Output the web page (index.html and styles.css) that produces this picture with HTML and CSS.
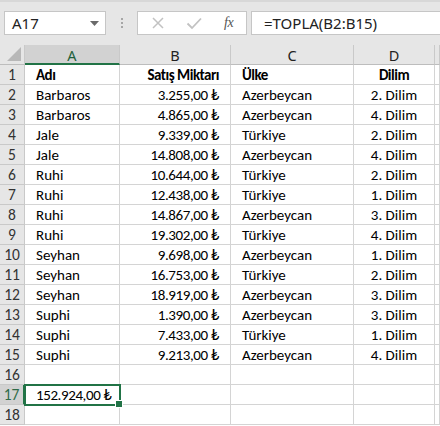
FILE: index.html
```html
<!DOCTYPE html>
<html>
<head>
<meta charset="utf-8">
<link rel="stylesheet" href="styles.css">
</head>
<body>
<div class="app">
  <div class="toolbar">
    <div class="namebox">
      <span class="name">A17</span>
      <svg class="arrow" width="9" height="5" viewBox="0 0 9 5"><polygon points="0,0 9,0 4.5,5" fill="#6a6a6a"/></svg>
    </div>
    <div class="dots"><i></i><i></i><i></i></div>
    <div class="fbtns">
      <svg class="ico" width="14" height="14" viewBox="0 0 14 14"><path d="M2 2 L12 12 M12 2 L2 12" stroke="#c2c2c2" stroke-width="1.5" fill="none"/></svg>
      <svg class="ico" width="16" height="14" viewBox="0 0 16 14"><path d="M1.5 7.5 L6 12 L15 2.5" stroke="#c2c2c2" stroke-width="1.8" fill="none"/></svg>
      <span class="fx">fx</span>
    </div>
    <div class="formula">=TOPLA(B2:B15)</div>
  </div>
  <div class="sheet">
    <div class="corner"><svg width="14" height="14" viewBox="0 0 14 14"><polygon points="14,0 14,14 0,14" fill="#b8b8b8"/></svg></div>
    <div class="ch sel">A</div>
    <div class="ch">B</div>
    <div class="ch">C</div>
    <div class="ch">D</div>
    <div class="ch"></div>

    <div class="rh">1</div><div class="c l b">Adı</div><div class="c r b">Satış Miktarı</div><div class="c l b">Ülke</div><div class="c m b">Dilim</div><div class="c"></div>
    <div class="rh">2</div><div class="c l">Barbaros</div><div class="c r n">3.255,00 ₺</div><div class="c l">Azerbeycan</div><div class="c m">2. Dilim</div><div class="c"></div>
    <div class="rh">3</div><div class="c l">Barbaros</div><div class="c r n">4.865,00 ₺</div><div class="c l">Azerbeycan</div><div class="c m">4. Dilim</div><div class="c"></div>
    <div class="rh">4</div><div class="c l">Jale</div><div class="c r n">9.339,00 ₺</div><div class="c l">Türkiye</div><div class="c m">2. Dilim</div><div class="c"></div>
    <div class="rh">5</div><div class="c l">Jale</div><div class="c r n">14.808,00 ₺</div><div class="c l">Azerbeycan</div><div class="c m">4. Dilim</div><div class="c"></div>
    <div class="rh">6</div><div class="c l">Ruhi</div><div class="c r n">10.644,00 ₺</div><div class="c l">Türkiye</div><div class="c m">2. Dilim</div><div class="c"></div>
    <div class="rh">7</div><div class="c l">Ruhi</div><div class="c r n">12.438,00 ₺</div><div class="c l">Türkiye</div><div class="c m">1. Dilim</div><div class="c"></div>
    <div class="rh">8</div><div class="c l">Ruhi</div><div class="c r n">14.867,00 ₺</div><div class="c l">Azerbeycan</div><div class="c m">3. Dilim</div><div class="c"></div>
    <div class="rh">9</div><div class="c l">Ruhi</div><div class="c r n">19.302,00 ₺</div><div class="c l">Türkiye</div><div class="c m">4. Dilim</div><div class="c"></div>
    <div class="rh">10</div><div class="c l">Seyhan</div><div class="c r n">9.698,00 ₺</div><div class="c l">Azerbeycan</div><div class="c m">1. Dilim</div><div class="c"></div>
    <div class="rh">11</div><div class="c l">Seyhan</div><div class="c r n">16.753,00 ₺</div><div class="c l">Türkiye</div><div class="c m">2. Dilim</div><div class="c"></div>
    <div class="rh">12</div><div class="c l">Seyhan</div><div class="c r n">18.919,00 ₺</div><div class="c l">Azerbeycan</div><div class="c m">3. Dilim</div><div class="c"></div>
    <div class="rh">13</div><div class="c l">Suphi</div><div class="c r n">1.390,00 ₺</div><div class="c l">Azerbeycan</div><div class="c m">3. Dilim</div><div class="c"></div>
    <div class="rh">14</div><div class="c l">Suphi</div><div class="c r n">7.433,00 ₺</div><div class="c l">Türkiye</div><div class="c m">1. Dilim</div><div class="c"></div>
    <div class="rh">15</div><div class="c l">Suphi</div><div class="c r n">9.213,00 ₺</div><div class="c l">Azerbeycan</div><div class="c m">4. Dilim</div><div class="c"></div>
    <div class="rh">16</div><div class="c"></div><div class="c"></div><div class="c"></div><div class="c"></div><div class="c"></div>
    <div class="rh selr">17</div><div class="c l n active">152.924,00 ₺<span class="handle"></span></div><div class="c"></div><div class="c"></div><div class="c"></div><div class="c"></div>
    <div class="rh">18</div><div class="c"></div><div class="c"></div><div class="c"></div><div class="c"></div><div class="c"></div>
  </div>
</div>
</body>
</html>
```
FILE: styles.css
```css
* { box-sizing: border-box; }
html, body { margin: 0; padding: 0; background: #ffffff; }
.app { width: 440px; height: 426px; overflow: hidden; background: #ffffff; }
.toolbar {
  height: 45px;
  background: #e6e6e6;
  border-top: 2px solid #d8d8d8;
  display: flex;
  align-items: flex-start;
  padding: 9px 0 0 4px;
  font-family: "Noto Sans", "DejaVu Sans", sans-serif;
}
.namebox {
  width: 102px; height: 24px;
  background: #fff;
  border: 1px solid #c6c6c6;
  display: flex; align-items: center; justify-content: space-between;
  padding: 0 6px 0 7px;
}
.name { font-size: 15px; color: #222; }
.arrow { display: block; }
.dots { width: 31px; height: 24px; display: flex; flex-direction: column; align-items: center; justify-content: center; gap: 2px; }
.dots i { display: block; width: 2px; height: 2px; background: #a6a6a6; }
.fbtns {
  width: 110px; height: 24px;
  background: #fff;
  border: 1px solid #c6c6c6;
  display: flex; align-items: center;
  padding-left: 13px;
  gap: 21px;
}
.fx { font-family: "Liberation Serif", "DejaVu Serif", serif; font-style: italic; font-size: 14px; color: #555; margin-left: 1px; letter-spacing: -0.5px; }
.formula {
  margin-left: 4px;
  flex: 1; height: 24px;
  background: #fff;
  border: 1px solid #c6c6c6;
  border-right: none;
  padding-left: 12px;
  font-size: 15px; color: #222;
  line-height: 22px;
}
.sheet {
  display: grid;
  grid-template-columns: 25px 95px 111px 123px 81px 5px;
  grid-template-rows: 20px repeat(18, 20px);
  background: #fff;
}
.corner { background: #e6e6e6; border-right: 1px solid #c9c9c9; border-bottom: 1px solid #bdbdbd; display: flex; align-items: flex-end; justify-content: flex-end; padding: 0 3px 3px 0; }
.corner svg { display: block; }
.ch {
  background: #e6e6e6;
  border-right: 1px solid #c9c9c9;
  border-bottom: 1px solid #bdbdbd;
  font-family: "Noto Sans", "DejaVu Sans", sans-serif;
  font-size: 14.5px; color: #222;
  display: flex; align-items: center; justify-content: center;
  padding-top: 1px;
}
.ch.sel { background: #d2d2d2; border-bottom: 2px solid #217346; color: #1e5f3a; }
.rh {
  background: #e6e6e6;
  border-right: 1px solid #c9c9c9;
  border-bottom: 1px solid #c9c9c9;
  font-family: "Carlito", "Lato", sans-serif;
  font-size: 15.5px; color: #333;
  display: flex; align-items: center; justify-content: center;
}
.rh.selr { background: #d2d2d2; color: #2f6b48; border-right: 2px solid #217346; }
.c {
  border-right: 1px solid #d4d4d4;
  border-bottom: 1px solid #d4d4d4;
  font-family: "Carlito", "Lato", sans-serif;
  font-size: 15px; color: #000;
  display: flex; align-items: center;
  white-space: nowrap;
  position: relative;
}
.c.l { padding-left: 11px; }
.c.r { justify-content: flex-end; padding-right: 11px; }
.c.m { justify-content: center; }
.c.n { letter-spacing: -0.4px; }
.c.b { font-weight: bold; font-size: 15px; letter-spacing: -0.5px; }
.active { outline: 2px solid #217346; outline-offset: -1px; z-index: 2; }
.handle { position: absolute; right: -4px; bottom: -4px; width: 6px; height: 6px; background: #217346; border: 1px solid #fff; box-sizing: content-box; }
```
